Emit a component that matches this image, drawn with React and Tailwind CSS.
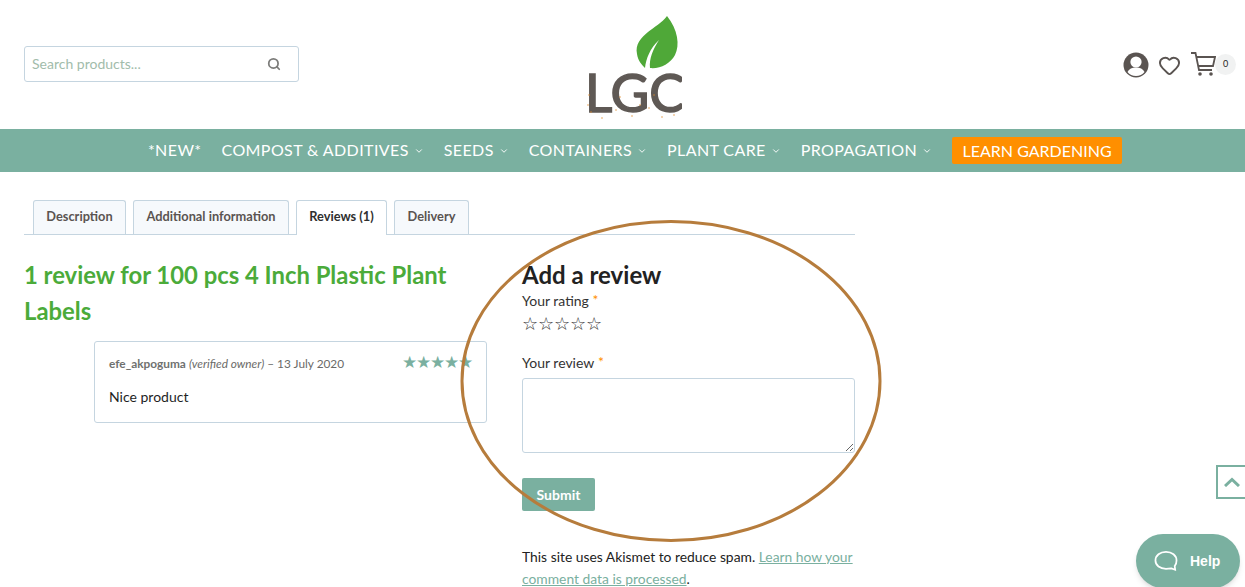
import React from 'react';
import { ChevronDown, Heart, Search } from 'lucide-react';

const navItems = [
    { label: '*NEW*' },
    { label: 'COMPOST & ADDITIVES', caret: true },
    { label: 'SEEDS', caret: true },
    { label: 'CONTAINERS', caret: true },
    { label: 'PLANT CARE', caret: true },
    { label: 'PROPAGATION', caret: true },
];

const tabs = [
    { label: 'Description', width: 'w-[93px]' },
    { label: 'Additional information', width: 'w-[156px]' },
    { label: 'Reviews (1)', width: 'w-[91px]', active: true },
    { label: 'Delivery', width: 'w-[75px]' },
];

// orange specks in the logo letters
const specks = [[9, 80], [8, 90], [11, 97], [22, 103], [40, 82], [36, 95], [52, 101], [60, 90], [74, 80], [69, 93], [82, 102], [94, 100]];

const Logo = () => (
    <svg width="102" height="104" viewBox="0 0 102 104" className="mt-[15px]">
        <path d="M57 1C52 8 44 12 38 17C31 23 25 29 27 39C28 46 32 50 35 53C36 44 40 33 49 25C43 34 39 44 40 53C50 54 60 49 65 40C70 30 68 15 57 1Z" fill="#4fa838" transform="translate(30 0)" />
        <text x="5" y="97" fontFamily="Lato, sans-serif" fontSize="53" fill="#5f5955" stroke="#5f5955" strokeWidth="1.6">LGC</text>
        {specks.map(([x, y]) => (
            <circle key={`${x}-${y}`} cx={x} cy={y} r="0.7" fill="#e08a2c" />
        ))}
    </svg>
);

const UserIcon = () => (
    <svg width="26" height="26" viewBox="0 0 26 26">
        <circle cx="13" cy="13" r="12.5" fill="#5a5451" />
        <path d="M4.5 20C6 16.8 9 15.5 13 15.5S20 16.8 21.5 20C19.5 22.7 16.5 24 13 24S6.5 22.7 4.5 20Z" fill="#fff" />
        <circle cx="13" cy="10" r="5.6" fill="#fff" />
    </svg>
);

const CartIcon = () => (
    <svg width="26" height="26" viewBox="0 0 26 26" fill="none" stroke="#5a5451" strokeWidth="1.8">
        <path d="M1 2H5.5L9 19H22" />
        <path d="M6.2 6H25L23 15H8" />
        <circle cx="10" cy="23" r="1.8" fill="#5a5451" stroke="none" />
        <circle cx="21" cy="23" r="1.8" fill="#5a5451" stroke="none" />
    </svg>
);

const Required = () => <span className="text-[#ff8f00] align-[1px]"> *</span>;

export default function App() {
    return (
        <div className="relative h-[587px] overflow-hidden bg-white font-['Lato',sans-serif] text-[14px] text-[#1f1f1f]">
            <header className="flex h-[129px] items-start pl-6 pr-[9px]">
                <div className="mt-[46px] flex h-9 w-[275px] items-center justify-between rounded-[3px] border border-[#c5d5e0] pl-[7px] pr-[17px]">
                    <span className="pb-[2px] text-[14px] text-[#a2bcab]">Search products...</span>
                    <Search size={14} strokeWidth={3} className="text-[#7c7c7a]" />
                </div>
                <div className="ml-[281px]">
                    <Logo />
                </div>
                <div className="ml-auto mt-[52px] flex items-center">
                    <UserIcon />
                    <Heart size={23} strokeWidth={2} className="ml-[9px] text-[#5a5451]" />
                    <div className="ml-[9px] mt-[-2px]">
                        <CartIcon />
                    </div>
                    <span className="ml-[-1px] mt-[-2px] flex h-[21px] w-[21px] items-center justify-center rounded-full bg-[#f1f2f2] text-[9px]">0</span>
                </div>
            </header>

            <nav className="flex h-[43px] items-center justify-center bg-[#7ab0a0] pl-[25px] text-[16px] tracking-[0.4px] text-white">
                {navItems.map((item) => (
                    <span key={item.label} className="mr-5 flex items-center whitespace-nowrap pb-[2px]">
                        {item.label}
                        {item.caret && <ChevronDown size={10} strokeWidth={2.2} className="ml-[5px] mt-[3px]" />}
                    </span>
                ))}
                <span className="flex h-[27px] w-[170px] items-center justify-center rounded-[2px] bg-[#ff8f00] text-[16px] tracking-normal">LEARN GARDENING</span>
            </nav>

            <main className="w-[855px] pl-6 pt-7">
                <div className="flex h-[35px] gap-[7px] border-b border-[#c5d5e0] pl-[9px]">
                    {tabs.map((tab) => (
                        <div
                            key={tab.label}
                            className={
                                tab.active
                                    ? `${tab.width} flex h-[35px] items-center justify-center rounded-t-[3px] border border-b-0 border-[#c5d5e0] bg-white pb-[2px] text-[12.8px] font-bold text-[#2f2f2f]`
                                    : `${tab.width} flex h-[34px] items-center justify-center rounded-t-[3px] border border-b-0 border-[#c5d5e0] bg-[#f6f9fc] pb-[2px] text-[12.8px] font-bold text-[#5a5451]`
                            }
                        >
                            {tab.label}
                        </div>
                    ))}
                </div>

                <div className="flex justify-between">
                    <section className="w-[463px]">
                        <h2 className="mt-[22px] w-[440px] text-[23.85px] font-bold leading-[36px] text-[#4bab3a]">
                            1 review for 100 pcs 4 Inch Plastic Plant Labels
                        </h2>
                        <div className="ml-[70px] mt-3 h-[82px] rounded-[3px] border border-[#c5d5e0] px-[14px] pt-[13px]">
                            <div className="flex items-center justify-between">
                                <p className="text-[11.85px] leading-[18px] text-[#6a6a68]">
                                    <b className="text-[#6f716f]">efe_akpoguma</b> <i>(verified owner)</i> – 13 July 2020
                                </p>
                                <span className="mt-[-4px] text-[17px] leading-[18px] tracking-[-1.1px] text-[#7ab0a0]">★★★★★</span>
                            </div>
                            <p className="mt-[14px] text-[14px] leading-[20px]">Nice product</p>
                        </div>
                    </section>

                    <section className="w-[333px]">
                        <h3 className="mt-[22px] text-[24px] font-bold leading-[36px] text-[#222]">Add a review</h3>
                        <p className="mt-[-3px] text-[14px] leading-[20px] text-[#333]">Your rating<Required /></p>
                        <p className="mt-[2px] text-[18px] leading-[20px] tracking-[0.1px] text-[#333]">☆☆☆☆☆</p>
                        <p className="mt-[19px] text-[14px] leading-[20px] text-[#333]">Your review<Required /></p>
                        <textarea className="mt-[5px] block h-[75px] w-[333px] rounded-[3px] border border-[#c5d5e0] bg-white" />
                        <button className="mt-[25px] flex h-[33px] w-[73px] items-center justify-center rounded-[2px] bg-[#7ab0a0] text-[14px] font-bold text-white">Submit</button>
                        <p className="mt-[35px] w-[333px] text-[13.85px] leading-[22px] text-[#222]">
                            This site uses Akismet to reduce spam. <a className="text-[#7ab0a0] underline">Learn how your comment data is processed</a>.
                        </p>
                    </section>
                </div>
            </main>

            {/* hand drawn circle over the form */}
            <svg width="430" height="330" viewBox="0 0 430 330" fill="none" className="pointer-events-none absolute left-[456px] top-[216px]">
                <ellipse cx="215" cy="165" rx="209" ry="159.5" stroke="#b67c3c" strokeWidth="3" />
            </svg>

            <div className="absolute right-0 top-[465px] flex h-[34px] w-[29px] items-center justify-center border-2 border-r-0 border-[#7ab0a0]">
                <svg width="16" height="10" viewBox="0 0 16 10" fill="none" stroke="#7ab0a0" strokeWidth="3">
                    <path d="M1 9L8 2.5L15 9" />
                </svg>
            </div>

            <div className="absolute left-[1136px] top-[534px] flex h-[54px] w-[104px] items-center rounded-full bg-[#7ab0a0] pl-[18px] shadow-md">
                <svg width="24" height="22" viewBox="0 0 26 24" fill="none" stroke="#fff" strokeWidth="1.9">
                    <path d="M13 2C6.5 2 1.5 6 1.5 11.5S6.5 20.5 13 20.5C15 20.5 17 20.3 19 20L23 21.5L22.5 17.5C24 16 24.5 13.8 24.5 11.5C24.5 6 19.5 2 13 2Z" />
                </svg>
                <span className="ml-3 font-['Liberation_Sans',sans-serif] text-[14px] font-bold text-white">Help</span>
            </div>
        </div>
    );
}
